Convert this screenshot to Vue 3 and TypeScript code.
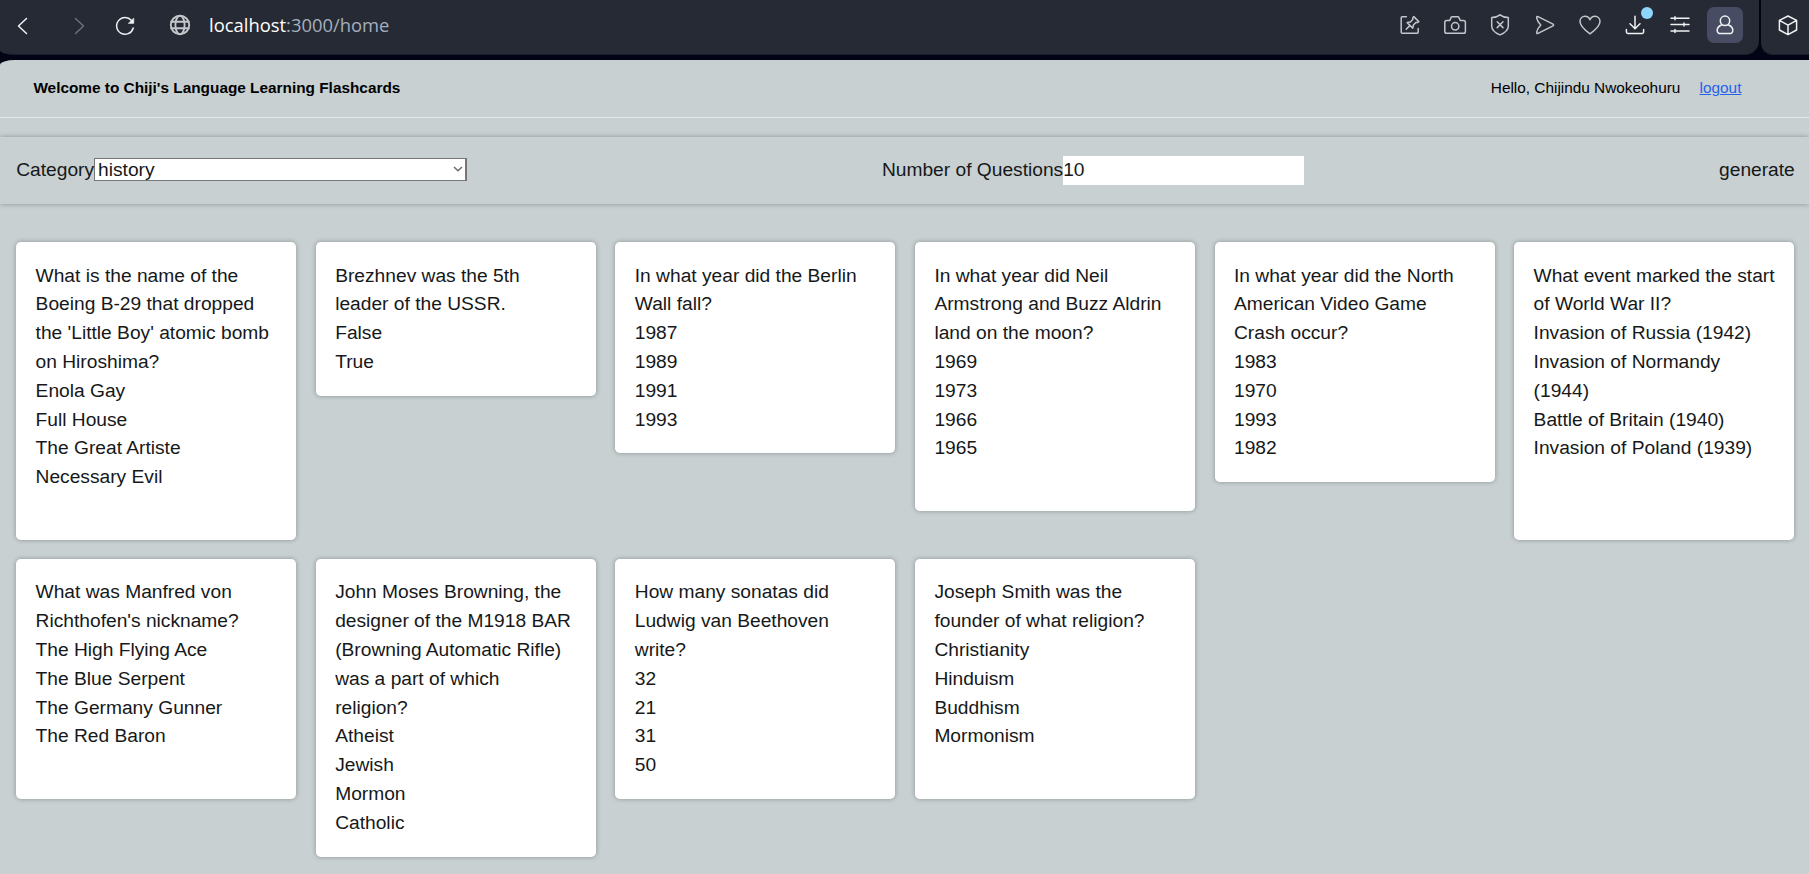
<script setup lang="ts">
import { ref } from 'vue'

interface Flashcard {
  question: string
  options: string[]
  rows: number
}

const category = ref('history')
const amount = ref('10')

const cards: Flashcard[] = [
  {
    question: "What is the name of the Boeing B-29 that dropped the 'Little Boy' atomic bomb on Hiroshima?",
    options: ['Enola Gay', 'Full House', 'The Great Artiste', 'Necessary Evil'],
    rows: 9,
  },
  { question: 'Brezhnev was the 5th leader of the USSR.', options: ['False', 'True'], rows: 4 },
  { question: 'In what year did the Berlin Wall fall?', options: ['1987', '1989', '1991', '1993'], rows: 6 },
  {
    question: 'In what year did Neil Armstrong and Buzz Aldrin land on the moon?',
    options: ['1969', '1973', '1966', '1965'],
    rows: 8,
  },
  {
    question: 'In what year did the North American Video Game Crash occur?',
    options: ['1983', '1970', '1993', '1982'],
    rows: 7,
  },
  {
    question: 'What event marked the start of World War II?',
    options: [
      'Invasion of Russia (1942)',
      'Invasion of Normandy (1944)',
      'Battle of Britain (1940)',
      'Invasion of Poland (1939)',
    ],
    rows: 9,
  },
  {
    question: "What was Manfred von Richthofen's nickname?",
    options: ['The High Flying Ace', 'The Blue Serpent', 'The Germany Gunner', 'The Red Baron'],
    rows: 7,
  },
  {
    question:
      'John Moses Browning, the designer of the M1918 BAR (Browning Automatic Rifle) was a part of which religion?',
    options: ['Atheist', 'Jewish', 'Mormon', 'Catholic'],
    rows: 9,
  },
  { question: 'How many sonatas did Ludwig van Beethoven write?', options: ['32', '21', '31', '50'], rows: 7 },
  {
    question: 'Joseph Smith was the founder of what religion?',
    options: ['Christianity', 'Hinduism', 'Buddhism', 'Mormonism'],
    rows: 7,
  },
]

const cardHeight = (rows: number): string => `${(rows * 28.8 + 38.4).toFixed(1)}px`
</script>

<template>
  <div class="window">
    <div class="chrome">
      <div class="bar">
        <div class="nav">
          <svg class="icon bright" viewBox="0 0 24 24"><path d="M15.5 4.5 L7.5 12 L15.5 19.5" /></svg>
          <svg class="icon dim" viewBox="0 0 24 24"><path d="M7.5 4.5 L15.5 12 L7.5 19.5" /></svg>
          <svg class="icon bright" viewBox="0 0 24 24">
            <path d="M19.6 8.2 A8.4 8.4 0 1 0 20.2 14" />
            <path class="solid" d="M20.7 4.6 V9.3 H15.8 Z" />
          </svg>
        </div>
        <div class="address">
          <svg class="icon globe" viewBox="0 0 24 24">
            <circle cx="12" cy="12" r="9.2" />
            <ellipse cx="12" cy="12" rx="4.6" ry="9.2" />
            <path d="M3.3 8.8 H20.7 M3.3 15.2 H20.7" />
          </svg>
          <span class="url"><span class="host">localhost</span>:3000/home</span>
        </div>
        <div class="tools">
          <span class="tool">
            <svg class="icon" viewBox="0 0 24 24">
              <path d="M8.4 3.7 H4.2 Q3.2 3.7 3.2 4.7 V19.3 Q3.2 20.3 4.2 20.3 H19.2 Q20.2 20.3 20.2 19.3 V15.6" />
              <path d="M15.8 3.6 L20.8 8.6 L19.4 9.6 L17.8 9.6 L15.4 12 L14.8 15.2 L9.2 9.6 L12.4 9 L14.8 6.4 L14.8 4.7 Z M12 12.4 L8.2 16.2" />
            </svg>
          </span>
          <span class="tool">
            <svg class="icon" viewBox="0 0 24 24">
              <path d="M3.5 7.4 H6.8 L8.2 4.2 Q8.5 3.7 9.2 3.7 H14.8 Q15.5 3.7 15.8 4.2 L17.2 7.4 H20.5 Q22.4 7.4 22.4 9.2 V18.5 Q22.4 20.3 20.5 20.3 H3.7 Q1.8 20.3 1.8 18.5 V9.2 Q1.8 7.4 3.5 7.4 Z" />
              <circle cx="12.2" cy="13.3" r="3.7" />
            </svg>
          </span>
          <span class="tool">
            <svg class="icon" viewBox="0 0 24 24">
              <path d="M12 1.8 Q15 4.3 20.3 4.6 V13 C20.3 17.4 16.6 20 12 21.9 C7.4 20 3.7 17.4 3.7 13 V4.6 Q9 4.3 12 1.8 Z" />
              <path d="M9.2 8.8 L15 14.6 M15 8.8 L9.2 14.6" />
            </svg>
          </span>
          <span class="tool">
            <svg class="icon" viewBox="0 0 24 24">
              <path d="M5 3.7 L20 11.2 Q21.2 12 20 12.8 L5 20.3 Q3.4 20.9 3.7 19.2 Q4.3 15.4 7.8 12 Q4.3 8.6 3.7 4.8 Q3.4 3.1 5 3.7 Z" />
            </svg>
          </span>
          <span class="tool">
            <svg class="icon" viewBox="0 0 24 24">
              <path d="M12 20.8 C6 16.6 2 13.2 2 8.6 C2 5.4 4.3 3.2 7 3.2 C9.4 3.2 11.2 4.6 12 6.8 C12.8 4.6 14.6 3.2 17 3.2 C19.7 3.2 22 5.4 22 8.6 C22 13.2 18 16.6 12 20.8 Z" />
            </svg>
          </span>
          <span class="tool bright">
            <svg class="icon" viewBox="0 0 24 24">
              <path d="M12 3.2 V15.6 M7 10.8 L12 15.7 L17 10.8 M3.4 16.6 V19 Q3.4 20.4 4.8 20.4 H19.2 Q20.6 20.4 20.6 19 V16.6" />
            </svg>
            <span class="dot"></span>
          </span>
          <span class="tool bright">
            <svg class="icon" viewBox="0 0 24 24">
              <path d="M3 5.3 H21 M3 11.5 H21 M3 18 H21 M7 3.8 V6.8 M16 10 V13 M7 16.5 V19.5" />
            </svg>
          </span>
          <span class="tool bright">
            <span class="profile">
              <svg class="icon" viewBox="0 0 24 24">
                <circle cx="12" cy="7.8" r="4.7" />
                <path d="M8.4 12 C5.6 13.2 4.2 15 4.2 17.2 C4.2 19.5 5.4 20.6 7.6 20.6 H16.4 C18.6 20.6 19.8 19.5 19.8 17.2 C19.8 15 18.4 13.2 15.6 12" />
              </svg>
            </span>
          </span>
        </div>
      </div>
      <div class="side bright">
        <svg class="icon" viewBox="0 0 24 24">
          <path d="M12 3 L20.6 7.4 V17 L12 21.6 L3.4 17 V7.4 Z M3.4 7.4 L12 12.2 L20.6 7.4 M12 12.2 V21.6" />
        </svg>
      </div>
    </div>

    <div class="page">
      <header class="top">
        <h1 class="title">Welcome to Chiji's Language Learning Flashcards</h1>
        <div class="user">
          <span>Hello, Chijindu Nwokeohuru</span>
          <a class="logout" href="#">logout</a>
        </div>
      </header>
      <hr class="rule" />
      <form class="filters" @submit.prevent>
        <div class="field">
          <label for="category">Category</label>
          <span class="select-box">
            <select id="category" v-model="category" class="select">
              <option value="history">history</option>
            </select>
            <svg class="chevron" viewBox="0 0 10 6"><path d="M1 1 L5 4.8 L9 1" /></svg>
          </span>
        </div>
        <div class="field">
          <label for="amount">Number of Questions</label>
          <input id="amount" v-model="amount" class="amount" type="text" />
        </div>
        <button class="generate">generate</button>
      </form>
      <main class="grid">
        <article
          v-for="card in cards"
          :key="card.question"
          class="card"
          :style="{ height: cardHeight(card.rows) }"
        >
          <div>{{ card.question }}</div>
          <div v-for="option in card.options" :key="option">{{ option }}</div>
        </article>
      </main>
    </div>
  </div>
</template>

<style>
body {
  margin: 0;
  overflow: hidden;
  background: #020314;
}
</style>

<style scoped>
* {
  box-sizing: border-box;
}
.window {
  height: 874px;
  overflow: hidden;
  display: flex;
  flex-direction: column;
  background: #020314;
  font-family: 'Liberation Sans', Arial, sans-serif;
}
.chrome {
  display: flex;
  gap: 2px;
  height: 55px;
  margin-bottom: 5px;
}
.bar {
  width: 1759px;
  display: flex;
  align-items: flex-start;
  background: #262a35;
  border-bottom: 1px solid #1b1e2b;
  border-radius: 0 0 14px 14px / 0 0 14px 5px;
  padding: 0 12px 0 11px;
}
.side {
  flex: 1;
  background: #262a35;
  border-bottom: 1px solid #1b1e2b;
  border-radius: 0 0 0 12px;
  padding: 13px 0 0 15px;
}
.icon {
  display: block;
  flex: none;
  width: 24px;
  height: 24px;
  fill: none;
  stroke: #c3c6ca;
  stroke-width: 1.5;
  stroke-linejoin: round;
  stroke-linecap: round;
}
.icon.bright,
.bright .icon {
  stroke: #f0f1f3;
}
.icon.dim {
  stroke: #6d707a;
}
.icon .solid {
  fill: #f0f1f3;
  stroke-width: 0.8;
}
.nav {
  display: flex;
  gap: 33px;
  padding-top: 14px;
}
.nav .icon:last-child {
  margin-left: -12px;
}
.address {
  display: flex;
  align-items: center;
  gap: 17px;
  height: 50px;
  margin-left: 31px;
  flex: 1;
}
.icon.globe {
  stroke-width: 1.9;
}
.url {
  font-family: 'Open Sans', 'Noto Sans', sans-serif;
  font-size: 18.4px;
  line-height: 24px;
  color: #a4afbe;
  white-space: nowrap;
}
.host {
  color: #fff;
}
.tools {
  display: flex;
  height: 50px;
}
.tool {
  position: relative;
  width: 44.9px;
  display: flex;
  align-items: center;
  justify-content: center;
}
.dot {
  position: absolute;
  top: 7px;
  right: 4.5px;
  width: 12px;
  height: 12px;
  border-radius: 50%;
  background: #8fd6ff;
}
.profile {
  display: flex;
  align-items: center;
  justify-content: center;
  width: 36px;
  height: 36px;
  border-radius: 7px;
  background: #484c62;
}
.page {
  flex: 1;
  background: #c8d0d2;
  border-radius: 15px 0 0 0 / 5px 0 0 0;
  font-size: 19.2px;
  line-height: 28.8px;
  color: #161819;
}
.top {
  height: 57px;
  display: flex;
  align-items: center;
  justify-content: space-between;
  padding: 0 67.6px 2px 33.4px;
  font-size: 15.36px;
  line-height: 23px;
  color: #000;
}
.title {
  margin: 0;
  font-size: inherit;
  font-weight: 700;
}
.user {
  display: flex;
  gap: 19.2px;
}
.logout {
  color: #2563eb;
  text-decoration: underline;
}
.rule {
  margin: 0;
  border: 0;
  height: 1px;
  background: #e5e7eb;
}
.filters {
  display: flex;
  align-items: center;
  justify-content: space-between;
  height: 67.2px;
  margin-top: 18.65px;
  padding: 0 14.2px 0 16.2px;
  box-shadow: 0 0 5px rgba(0, 0, 0, 0.3);
}
.field {
  display: flex;
  align-items: center;
}
.select-box {
  display: flex;
  align-items: center;
  width: 373px;
  height: 23px;
  margin-bottom: 1.6px;
  padding-right: 2px;
  background: #fff;
  border: 1px solid #767676;
  border-right-width: 2px;
}
.select {
  flex: 1;
  appearance: none;
  border: 0;
  padding: 0 3px;
  background: transparent;
  font: inherit;
  line-height: 21px;
  height: 21px;
  color: inherit;
}
.chevron {
  width: 10px;
  height: 6px;
  fill: none;
  stroke: #6b6b6b;
  stroke-width: 1.5;
}
.amount {
  width: 241px;
  height: 28.8px;
  border: 0;
  padding: 0;
  font: inherit;
  color: inherit;
  background: #fff;
}
.generate {
  border: 0;
  padding: 0;
  background: transparent;
  font: inherit;
  color: inherit;
}
.grid {
  display: grid;
  grid-template-columns: repeat(6, 1fr);
  gap: 19.2px 19.6px;
  align-items: start;
  padding: 38.4px 14.8px 0 16.2px;
}
.card {
  padding: 19.35px 19.2px 19.05px 19.4px;
  background: #fff;
  border-radius: 4.8px;
  box-shadow: 0 0 5px rgba(0, 0, 0, 0.3);
}
</style>
